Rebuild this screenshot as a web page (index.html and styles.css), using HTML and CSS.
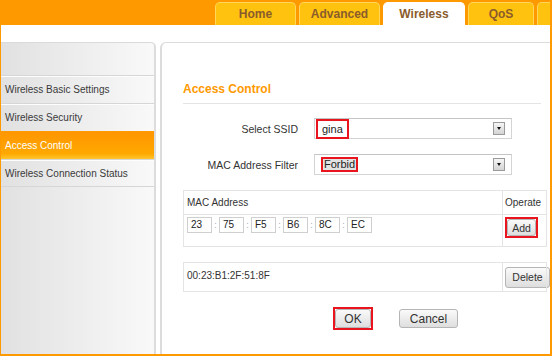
FILE: index.html
```html
<!DOCTYPE html>
<html lang="en">
<head>
  <meta charset="UTF-8" />
  <title>Access Control</title>
  <meta name="viewport" content="width=device-width, initial-scale=1.0" />
  <link rel="stylesheet" href="styles.css">
</head>
<body>

  <div class="frame">

    <header class="topbar">
      <nav class="tabs">
        <span class="tab">Home</span>
        <span class="tab">Advanced</span>
        <span class="tab active">Wireless</span>
        <span class="tab qos">QoS</span>
        <span class="tab more"></span>
      </nav>
    </header>

    <div class="content">

      <aside class="sidebar">
        <div class="side-top"></div>
        <a class="side-item">Wireless Basic Settings</a>
        <a class="side-item">Wireless Security</a>
        <a class="side-item current">Access Control</a>
        <a class="side-item">Wireless Connection Status</a>
      </aside>

      <main class="panel">
        <h2 class="title">Access Control</h2>

        <div class="form-row">
          <label>Select SSID</label>
          <div class="select">
            <span class="mark big">gina</span>
            <span class="arrow"></span>
          </div>
        </div>

        <div class="form-row">
          <label>MAC Address Filter</label>
          <div class="select">
            <span class="mark small"><span class="picked">Forbid</span></span>
            <span class="arrow"></span>
          </div>
        </div>

        <table class="mac-table">
          <tr class="head">
            <td class="col-mac">MAC Address</td>
            <td class="col-op">Operate</td>
          </tr>
          <tr class="input-row">
            <td class="col-mac">
              <div class="mac-inputs">
                <span class="octet">23</span><span class="sep">:</span>
                <span class="octet">75</span><span class="sep">:</span>
                <span class="octet">F5</span><span class="sep">:</span>
                <span class="octet">B6</span><span class="sep">:</span>
                <span class="octet">8C</span><span class="sep">:</span>
                <span class="octet">EC</span>
              </div>
            </td>
            <td class="col-op">
              <span class="mark-btn"><button class="btn add">Add</button></span>
            </td>
          </tr>
        </table>

        <table class="mac-table list">
          <tr>
            <td class="col-mac entry">00:23:B1:2F:51:8F</td>
            <td class="col-op"><button class="btn del">Delete</button></td>
          </tr>
        </table>

        <div class="actions">
          <span class="mark-btn ok-wrap"><button class="btn ok">OK</button></span>
          <button class="btn cancel">Cancel</button>
        </div>
      </main>

    </div>
  </div>

</body>
</html>
```

FILE: styles.css
```css
:root {
  --laranja: #ff9900;
  --aba: #ffc20e;
  --aba-borda: #ffd65a;
  --aba-texto: #8a5c2c;
  --linha: #e4e4e4;
  --texto: #333;
  --vermelho: #e8141e;
}

* {
  box-sizing: border-box;
}

body {
  margin: 0;
  font-family: "Liberation Sans", Arial, sans-serif;
  color: var(--texto);
  background: #fff;
}

.frame {
  width: 552px;
  height: 356px;
  border-left: 1px solid var(--laranja);
  border-right: 2px solid var(--laranja);
  border-bottom: 2px solid var(--laranja);
  overflow: hidden;
  display: flex;
  flex-direction: column;
}

.topbar {
  height: 25px;
  background: var(--laranja);
  padding: 2px 0 0 214px;
  overflow: hidden;
  flex-shrink: 0;
}

.tabs {
  display: flex;
  gap: 3px;
  white-space: nowrap;
}

.tab {
  width: 81px;
  height: 23px;
  line-height: 22px;
  text-align: center;
  font-size: 12px;
  font-weight: bold;
  color: var(--aba-texto);
  background: var(--aba);
  border: 1px solid var(--aba-borda);
  border-bottom: none;
  border-radius: 5px 5px 0 0;
  flex-shrink: 0;
}

.tab.active {
  width: 82px;
  background: #fff;
  border-color: #fff;
}

.tab.qos {
  width: 66px;
}

.tab.more {
  width: 40px;
}

.content {
  flex: 1;
  display: flex;
  gap: 4px;
  padding-top: 17px;
  min-height: 0;
}

.sidebar {
  width: 155px;
  flex-shrink: 0;
  background: linear-gradient(to right, #e1e1e1, #f9f9f9);
  border-top: 1px solid #dadada;
  border-right: 2px solid #dcdcdc;
  border-radius: 0 5px 0 0;
}

.side-top {
  height: 32px;
}

.side-item {
  display: block;
  height: 28px;
  line-height: 27px;
  padding-left: 4px;
  font-size: 10px;
  color: #3a3a3a;
  border-top: 1px solid #d6d6d6;
  box-shadow: inset 0 1px 0 #fdfdfd;
}

.side-item:last-child {
  border-bottom: 1px solid #d6d6d6;
}

.side-item.current {
  color: #fff;
  background: linear-gradient(to bottom, #ff9600, #ffa800 80%, #ffc52e);
  border-top-color: #ff9a00;
  box-shadow: none;
}

.panel {
  flex: 1;
  border-top: 1px solid #dcdcdc;
  border-left: 2px solid #dcdcdc;
  border-radius: 6px 0 0 0;
  padding: 38px 0 0 21px;
}

.title {
  margin: 0 9px 14px 0;
  font-size: 12px;
  line-height: 16px;
  color: var(--laranja);
  padding-bottom: 6px;
  border-bottom: 1px solid var(--linha);
}

.form-row {
  display: flex;
  align-items: center;
  height: 21px;
  margin-bottom: 15px;
}

.form-row label {
  width: 115px;
  text-align: right;
  font-size: 10.5px;
  color: #333;
  margin-right: 16px;
}

.select {
  width: 198px;
  height: 21px;
  border: 1px solid #d4d4d4;
  border-top-color: #c4c4c4;
  background: #fff;
  display: flex;
  align-items: center;
  justify-content: space-between;
  padding: 0 6px 0 1px;
  font-size: 11px;
  color: #222;
}

.mark {
  border: 2px solid var(--vermelho);
  display: flex;
  align-items: center;
}

.mark.big {
  height: 20px;
  padding: 0 4px;
}

.mark.small {
  height: 15px;
  margin-left: 5px;
}

.picked {
  background: #e2e2e2;
  padding: 0 1px;
  line-height: 11px;
}

.arrow {
  width: 12px;
  height: 13px;
  border: 1px solid #9a9a9a;
  background: linear-gradient(#f6f6f6, #d4d4d4);
  position: relative;
}

.arrow::after {
  content: "";
  position: absolute;
  left: 3px;
  top: 4px;
  border-left: 2.5px solid transparent;
  border-right: 2.5px solid transparent;
  border-top: 3px solid #111;
}

.mac-table {
  width: 364px;
  table-layout: fixed;
  border-collapse: collapse;
  border: 1px solid var(--linha);
  margin-bottom: 15px;
  font-size: 10px;
}

.mac-table td {
  padding: 0;
  vertical-align: middle;
  overflow: visible;
}

.col-mac {
  width: 319px;
  padding-left: 3px !important;
}

.col-op {
  border-left: 1px solid var(--linha);
  padding-left: 2px !important;
}

.head td {
  height: 24px;
  border-bottom: 1px solid var(--linha);
  font-size: 10px;
}

.input-row td {
  height: 32px;
  vertical-align: top;
  padding-top: 2px !important;
}

.mac-inputs {
  display: flex;
  align-items: center;
}

.octet {
  width: 25px;
  height: 16px;
  line-height: 14px;
  border: 1px solid #cfcfcf;
  padding-left: 3px;
  font-size: 10px;
  color: #222;
}

.sep {
  width: 7px;
  text-align: center;
  color: #aaa;
  font-size: 9px;
}

.mark-btn {
  display: inline-block;
  border: 2px solid var(--vermelho);
}

.btn {
  display: block;
  font-family: "Liberation Sans", Arial, sans-serif;
  color: #333;
  background: linear-gradient(#fafafa, #dedede);
  border: 1px solid #b5b5b5;
  border-radius: 3px;
  padding: 0;
}

.btn.add {
  width: 29px;
  height: 17px;
  font-size: 10.5px;
}

.list td {
  height: 29px;
}

.entry {
  font-size: 10px;
  color: #333;
  padding-bottom: 3px !important;
}

.btn.del {
  width: 45px;
  height: 21px;
  font-size: 10.5px;
}

.actions {
  display: flex;
  align-items: center;
  gap: 26px;
  padding-left: 150px;
  margin-top: 15px;
}

.btn.ok {
  width: 36px;
  height: 19px;
  font-size: 12px;
}

.btn.cancel {
  width: 59px;
  height: 19px;
  font-size: 12px;
}
```
